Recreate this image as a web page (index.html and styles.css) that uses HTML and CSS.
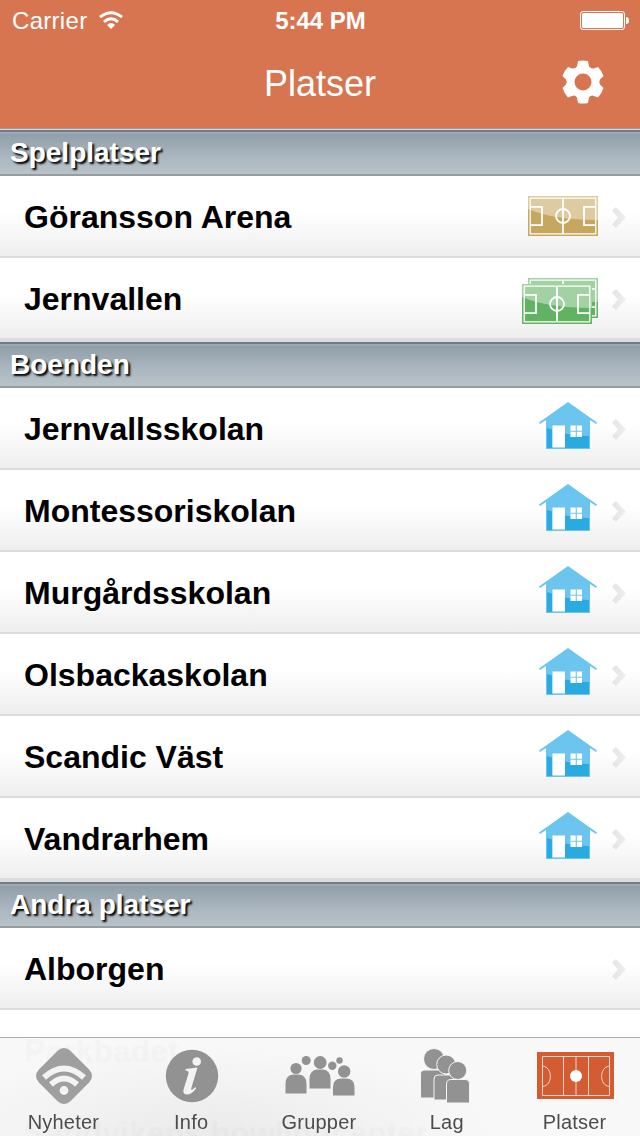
FILE: index.html
```html
<!DOCTYPE html>
<html lang="sv">

<head>
    <meta charset="UTF-8">
    <title>Platser</title>
    <link rel="stylesheet" href="styles.css">
</head>

<body>
    <!-- Shared icons -->
    <svg class="symbols">
        <defs>
            <linearGradient id="chevron-fill" x1="0" y1="0" x2="1" y2="0">
                <stop offset="0" stop-color="#e4e4e5" />
                <stop offset="1" stop-color="#eeeff1" />
            </linearGradient>
            <symbol id="chevron" viewBox="0 0 14 21">
                <path d="M4 0L14 10.500L4 21L0 17.500L6 10.500L0 3.500Z" fill="url(#chevron-fill)" />
            </symbol>
            <symbol id="pitch" viewBox="0 0 70 40">
                <path d="M0 0H70V40H0Z" fill="currentColor" />
                <path d="M0 0H70V24Q26 24 0 13Z" fill="#fff" fill-opacity=".41" />
                <g fill="none" stroke="#fff" stroke-width="1.800">
                    <path stroke-width="1.300" d="M2.200 2.200H67.800V37.800H2.200Z" />
                    <path d="M35 2V38M2 10.800H14V29.200H2M68 10.800H56V29.200H68" />
                    <circle cx="35" cy="20" r="7" />
                </g>
            </symbol>
            <symbol id="house" viewBox="0 0 58 48">
                <path d="M29 0L58 20.500L57 22L51 18V47H7V18L1 22L0 20.500Z" fill="#6cc5ee" />
                <path d="M8 26L13 27.500V45.500H26V31.500Q38 34 50 34V46H8Z" fill="#29abe2" />
                <path d="M13.500 23.500H26V45.500H13.500ZM31.500 23.500H43V35H31.500Z" fill="#fff" />
                <path d="M37.250 23.500V35M31.500 29.300H43" stroke="#6cc5ee" stroke-width="1.100" />
            </symbol>
        </defs>
    </svg>

    <header class="top">
        <div class="status">
            <div class="carrier">
                <span>Carrier</span>
                <svg class="wifi" viewBox="0 0 24 18">
                    <g fill="none" stroke="#fff" stroke-width="3">
                        <path d="M1 6.200Q12-2.800 23 6.200" />
                        <path d="M5 10.800Q12 4.800 19 10.800" />
                    </g>
                    <path d="M8 14Q12 10 16 14L12 18Z" fill="#fff" />
                </svg>
            </div>
            <span class="clock">5:44 PM</span>
            <svg class="battery" viewBox="0 0 49 19">
                <rect x=".5" y=".5" width="44" height="18" rx="2.500" fill="none" stroke="#fff" />
                <rect x="2" y="2" width="41" height="15" rx="1.500" fill="#fff" />
                <path d="M46 6Q49 6 49 9.500T46 13Z" fill="#fff" />
            </svg>
        </div>
        <div class="navbar">
            <h1>Platser</h1>
            <svg class="gear" viewBox="0 0 42 44">
                <path fill="#fff" fill-rule="evenodd" d="M16 1Q21 0 26 1L27 6.500Q29 9 32 8.500L36 7Q40 11 41.500 16L38 19.500Q36.500 22 38 24.500L41.500 28Q40 33 36 37.500L32 36Q29 34.500 27 37.500L26 43Q21 44 16 43L15 37.500Q13 34.500 10 36L6 37.500Q2 33 .5 28L4 24.500Q5.500 22 4 19.500L.5 16Q2 11 6 7L10 8.500Q13 9 15 6.500ZM21 13.500A8.500 8.500 0 1 0 21 30.500A8.500 8.500 0 1 0 21 13.500Z" />
            </svg>
        </div>
    </header>

    <main class="list">
        <h2>Spelplatser</h2>
        <ul>
            <li>
                <span>Göransson Arena</span>
                <svg class="pitch sand"><use href="#pitch" /></svg>
                <svg class="chevron"><use href="#chevron" /></svg>
            </li>
            <li>
                <span>Jernvallen</span>
                <svg class="pitches" viewBox="0 0 76 46">
                    <use href="#pitch" x="6" y="0" width="70" height="40" />
                    <use href="#pitch" x="0" y="6" width="70" height="40" />
                </svg>
                <svg class="chevron"><use href="#chevron" /></svg>
            </li>
        </ul>

        <h2>Boenden</h2>
        <ul>
            <li>
                <span>Jernvallsskolan</span>
                <svg class="house"><use href="#house" /></svg>
                <svg class="chevron"><use href="#chevron" /></svg>
            </li>
            <li>
                <span>Montessoriskolan</span>
                <svg class="house"><use href="#house" /></svg>
                <svg class="chevron"><use href="#chevron" /></svg>
            </li>
            <li>
                <span>Murgårdsskolan</span>
                <svg class="house"><use href="#house" /></svg>
                <svg class="chevron"><use href="#chevron" /></svg>
            </li>
            <li>
                <span>Olsbackaskolan</span>
                <svg class="house"><use href="#house" /></svg>
                <svg class="chevron"><use href="#chevron" /></svg>
            </li>
            <li>
                <span>Scandic Väst</span>
                <svg class="house"><use href="#house" /></svg>
                <svg class="chevron"><use href="#chevron" /></svg>
            </li>
            <li>
                <span>Vandrarhem</span>
                <svg class="house"><use href="#house" /></svg>
                <svg class="chevron"><use href="#chevron" /></svg>
            </li>
        </ul>

        <h2>Andra platser</h2>
        <ul>
            <li>
                <span>Alborgen</span>
                <svg class="chevron"><use href="#chevron" /></svg>
            </li>
            <li><span>Parkbadet</span></li>
            <li><span>Sandvikens bowlingcenter</span></li>
        </ul>
    </main>

    <nav class="tabbar">
        <a class="tab">
            <svg width="58" height="58" viewBox="0 0 58 58">
                <rect x="6.600" y="6.600" width="44.800" height="44.800" rx="9" transform="rotate(45 29 29)" fill="#9f9f9f" />
                <g fill="none" stroke="#f3f3f3" stroke-width="5.800">
                    <path d="M9 30.500Q29 12.500 49 30.500" />
                    <path d="M16 37.500Q29 25.500 42 37.500" />
                </g>
                <circle cx="29" cy="43.500" r="4.400" fill="#f3f3f3" />
            </svg>
            <span>Nyheter</span>
        </a>
        <a class="tab">
            <svg width="54" height="54" viewBox="0 0 54 54">
                <circle cx="27" cy="27" r="26.200" fill="#929292" />
                <circle cx="31.700" cy="12.500" r="4.300" fill="#f3f3f3" />
                <path d="M20.500 20L32.500 18.500L26.500 38.500Q25.500 41.500 27.500 40.500L30.500 38L31 39.500Q27 45.500 21.500 45.500Q17 45 19 39L23.500 24.500Q24 21.500 20.500 21.500Z" fill="#f3f3f3" />
            </svg>
            <span>Info</span>
        </a>
        <a class="tab">
            <svg class="groups" width="70" height="42" viewBox="0 0 70 42" fill="#929292">
                <circle cx="11" cy="13.500" r="5.600" />
                <circle cx="21.200" cy="5.500" r="4.500" />
                <circle cx="35.200" cy="7.500" r="6.400" />
                <circle cx="47.300" cy="10.800" r="4.200" />
                <circle cx="54.500" cy="5.500" r="3.200" />
                <circle cx="59.200" cy="16.500" r="6.200" />
                <path d="M.5 38.500V29Q.5 19.500 9 19.500H13Q21.500 19.500 21.500 29V38.500ZM24.500 33.500V24Q24.500 14.500 33 14.500H37Q45.500 14.500 45.500 24V33.500ZM48 40.500V32Q48 23.500 56.500 23.500H61Q69.500 23.500 69.500 32V40.500Z" />
            </svg>
            <span>Grupper</span>
        </a>
        <a class="tab">
            <svg class="team" width="50" height="56" viewBox="0 0 50 56" fill="#929292" stroke="#f5f5f5">
                <path d="M.5 50V26Q.5 22 5 22H21Q25 22 25 26V50Z" />
                <circle cx="14" cy="11" r="10.500" />
                <path d="M14 52V31Q14 27 18 27H34Q38 27 38 31V52Z" />
                <circle cx="26.200" cy="16.500" r="9.500" />
                <path d="M26.500 55V36Q26.500 31.500 31 31.500H45Q49.500 31.500 49.500 36V55Z" />
                <circle cx="37.700" cy="22.500" r="9" />
            </svg>
            <span>Lag</span>
        </a>
        <a class="tab">
            <svg width="77" height="47" viewBox="0 0 77 47">
                <path d="M0 0H77V47H0Z" fill="#d35c33" />
                <g fill="none" stroke="#f3d5c9">
                    <path d="M5.500 4.500H72.500V43.500H5.500ZM26.500 4.500V43.500M39 4.500V43.500M51.500 4.500V43.500" />
                    <path d="M5.500 14C16 15 16 34 5.500 34.500M72.500 14C62 15 62 34 72.500 34.500" />
                </g>
                <circle cx="39" cy="24" r="6" fill="#fff" />
            </svg>
            <span>Platser</span>
        </a>
    </nav>
</body>

</html>
```
FILE: styles.css
```css
* {
    box-sizing: border-box;
}

body {
    margin: 0;
    width: 640px;
    height: 1136px;
    overflow: hidden;
    position: relative;
    background-color: #fff;
    font-family: "Liberation Sans", Arial, sans-serif;
}

svg {
    display: block;
    flex: none;
}

.symbols {
    position: absolute;
    width: 0;
    height: 0;
}

/* Header */
.top {
    height: 130px;
    background-color: #d77551;
    color: #fff;
    border-bottom: 1px solid #d5d9dc;
    box-shadow: inset 0 -1px #a49a95;
}

.status {
    display: grid;
    grid-template-columns: 1fr auto 1fr;
    align-items: center;
    height: 41px;
    padding: 0 11px 0 12px;
    font-size: 24px;
}

.carrier {
    display: flex;
    align-items: center;
    gap: 12px;
    letter-spacing: .3px;
}

.wifi {
    width: 24px;
    height: 18px;
    margin-bottom: 1px;
}

.clock {
    font-weight: bold;
}

.battery {
    width: 49px;
    height: 19px;
    justify-self: end;
}

.navbar {
    display: grid;
    grid-template-columns: 1fr auto 1fr;
    align-items: center;
    height: 85px;
    padding: 0 36px;
}

.navbar h1 {
    grid-column: 2;
    margin: 0;
    font-size: 36px;
    font-weight: normal;
}

.gear {
    width: 42px;
    height: 44px;
    margin-bottom: 4px;
    justify-self: end;
}

/* List */
.list h2 {
    height: 46px;
    margin: 0;
    padding-left: 10px;
    border-top: 2px solid #717b84;
    border-bottom: 2px solid #969da2;
    background: linear-gradient(#9caab6 2px, #909fa9 2px, #a9b4be 55%, #b9c3c9);
    color: #fff;
    font-size: 28px;
    line-height: 42px;
    text-shadow: 2px 2px 2px #000;
}

.list ul {
    margin: 0;
    padding: 0;
    list-style: none;
    border-bottom: 2px solid #dcdcdc;
}

.list li {
    display: flex;
    align-items: center;
    height: 82px;
    padding: 0 14px 0 24px;
    border-bottom: 2px solid #dcdcdc;
    background: linear-gradient(#fff 45%, #eee);
    font-size: 32px;
    font-weight: bold;
}

.list li span {
    flex: 1;
    padding-top: 3px;
}

.pitch {
    width: 70px;
    height: 40px;
}

.sand {
    color: #c6a75f;
}

.pitches {
    width: 76px;
    height: 46px;
    margin-top: 5px;
    color: #62b263;
}

.house {
    width: 58px;
    height: 48px;
    margin: 0 1px 5px 0;
}

.chevron {
    width: 14px;
    height: 21px;
    margin: 2px 0 0 14px;
}

/* Tab bar, floats over the list */
.tabbar {
    position: absolute;
    left: 0;
    right: 0;
    bottom: 0;
    display: flex;
    height: 99px;
    padding-right: 1px;
    border-top: 1px solid #acacac;
    background: radial-gradient(ellipse 290px 90px at 210px 100%, rgba(234, 234, 234, .98), rgba(248, 248, 248, .98));
    backdrop-filter: blur(1px);
}

.tab {
    flex: 1;
    display: flex;
    flex-direction: column;
    align-items: center;
    color: #4c4c4c;
    font-size: 20px;
    letter-spacing: .2px;
}

.tab svg {
    margin: auto;
    position: relative;
    top: 1px;
}

.tab .groups {
    left: 1px;
}

.tab .team {
    left: -2px;
}

.tab span {
    height: 24px;
    margin-bottom: 1px;
    padding-right: 1px;
    line-height: 23px;
}
```
